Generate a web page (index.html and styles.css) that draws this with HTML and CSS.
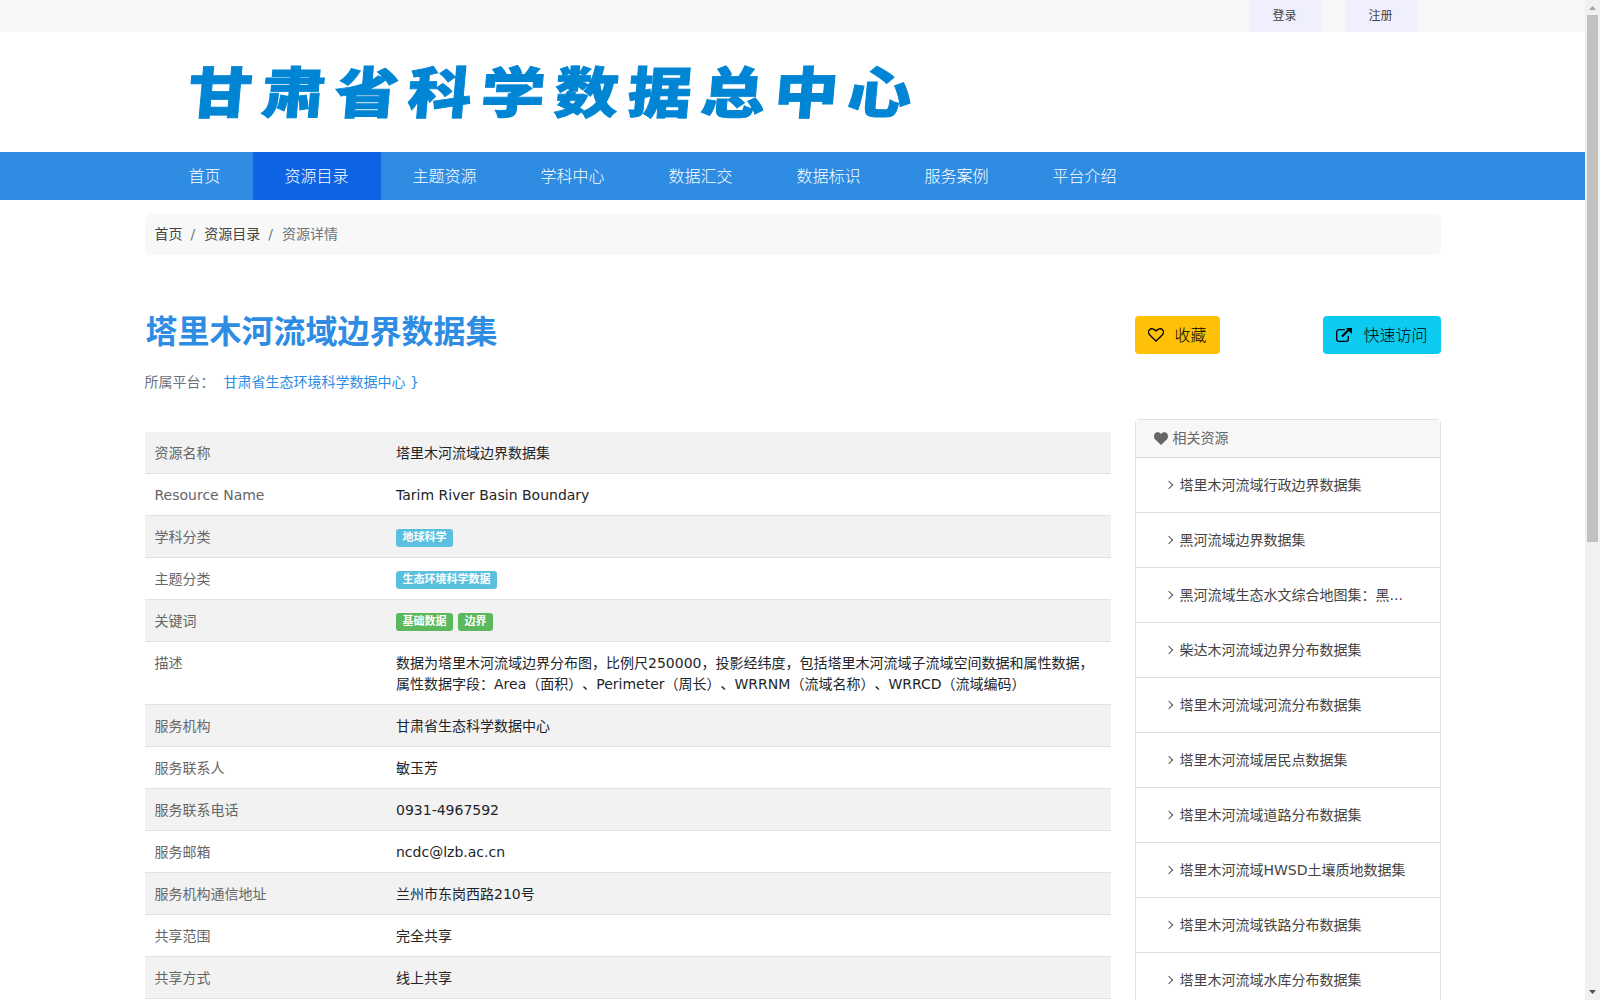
FILE: index.html
```html
<!DOCTYPE html>
<html lang="zh-CN">
  <head>
    <meta charset="UTF-8" />
    <meta name="viewport" content="width=device-width, initial-scale=1.0" />
    <title>塔里木河流域边界数据集</title>
    <link rel="stylesheet" href="styles.css">
  </head>
  <body>
    <div class="page">
      <div class="topbar">
        <div class="container">
          <a href="#">登录</a>
          <a href="#">注册</a>
        </div>
      </div>
      <header class="container">
        <div class="logo">甘肃省科学数据总中心</div>
      </header>
      <nav class="navbar">
        <ul class="container">
          <li><a href="#">首页</a></li>
          <li class="active"><a href="#">资源目录</a></li>
          <li><a href="#">主题资源</a></li>
          <li><a href="#">学科中心</a></li>
          <li><a href="#">数据汇交</a></li>
          <li><a href="#">数据标识</a></li>
          <li><a href="#">服务案例</a></li>
          <li><a href="#">平台介绍</a></li>
        </ul>
      </nav>
      <main class="container">
        <ol class="breadcrumb">
          <li><a href="#">首页</a></li>
          <li><a href="#">资源目录</a></li>
          <li class="current">资源详情</li>
        </ol>
        <div class="row">
          <section class="detail">
            <h2>塔里木河流域边界数据集</h2>
            <p class="platform"><span>所属平台：</span><a href="#">甘肃省生态环境科学数据中心 }</a></p>
            <table class="table">
              <tr>
                <th>资源名称</th>
                <td>塔里木河流域边界数据集</td>
              </tr>
              <tr>
                <th>Resource Name</th>
                <td>Tarim River Basin Boundary</td>
              </tr>
              <tr>
                <th>学科分类</th>
                <td><span class="label info">地球科学</span></td>
              </tr>
              <tr>
                <th>主题分类</th>
                <td><span class="label info">生态环境科学数据</span></td>
              </tr>
              <tr>
                <th>关键词</th>
                <td><span class="label success">基础数据</span> <span class="label success">边界</span></td>
              </tr>
              <tr>
                <th>描述</th>
                <td>数据为塔里木河流域边界分布图，比例尺250000，投影经纬度，包括塔里木河流域子流域空间数据和属性数据，<br />属性数据字段：Area（面积）、Perimeter（周长）、WRRNM（流域名称）、WRRCD（流域编码）</td>
              </tr>
              <tr>
                <th>服务机构</th>
                <td>甘肃省生态科学数据中心</td>
              </tr>
              <tr>
                <th>服务联系人</th>
                <td>敏玉芳</td>
              </tr>
              <tr>
                <th>服务联系电话</th>
                <td>0931-4967592</td>
              </tr>
              <tr>
                <th>服务邮箱</th>
                <td>ncdc@lzb.ac.cn</td>
              </tr>
              <tr>
                <th>服务机构通信地址</th>
                <td>兰州市东岗西路210号</td>
              </tr>
              <tr>
                <th>共享范围</th>
                <td>完全共享</td>
              </tr>
              <tr>
                <th>共享方式</th>
                <td>线上共享</td>
              </tr>
            </table>
          </section>
          <aside class="side">
            <div class="actions">
              <button class="btn warning" type="button">
                <svg width="16" height="14" viewBox="0 0 16 14" fill="none" stroke="currentColor" stroke-width="1.3"><path d="M8 13 2 7.2C.2 5.3.3 2.9 1.6 1.6 3.3.2 6 .5 8 3c2-2.5 4.700-2.800 6.400-1.400 1.300 1.300 1.400 3.700-.4 5.600z" /></svg>
                收藏
              </button>
              <button class="btn cyan" type="button">
                <svg width="16" height="14" viewBox="0 0 16 14" fill="none" stroke="currentColor"><path stroke-width="1.3" d="M9 1.700H3A2.300 2.300 0 0 0 .7 4v7A2.300 2.300 0 0 0 3 13.300h7a2.300 2.300 0 0 0 2.300-2.300V8" /><path stroke-width="2.2" d="m6 8.500 7-7" /><path fill="currentColor" stroke="none" d="M10 0h6v6z" /></svg>
                快速访问
              </button>
            </div>
            <div class="card">
              <div class="card-header">
                <svg width="14" height="13" viewBox="0 0 14 13" fill="currentColor"><path d="M7 13 1 7.200C-.2 5.900-.3 2.900.8 1.500 2.600-.5 5.600-.2 7 2c1.400-2.200 4.400-2.500 6.200-.5 1.100 1.400 1 4.400-.2 5.700z" /></svg>
                相关资源
              </div>
              <ul>
                <li><a href="#">塔里木河流域行政边界数据集</a></li>
                <li><a href="#">黑河流域边界数据集</a></li>
                <li><a href="#">黑河流域生态水文综合地图集：黑...</a></li>
                <li><a href="#">柴达木河流域边界分布数据集</a></li>
                <li><a href="#">塔里木河流域河流分布数据集</a></li>
                <li><a href="#">塔里木河流域居民点数据集</a></li>
                <li><a href="#">塔里木河流域道路分布数据集</a></li>
                <li><a href="#">塔里木河流域HWSD土壤质地数据集</a></li>
                <li><a href="#">塔里木河流域铁路分布数据集</a></li>
                <li><a href="#">塔里木河流域水库分布数据集</a></li>
              </ul>
            </div>
          </aside>
        </div>
      </main>
    </div>
    <div class="scrollbar">
      <svg width="15" height="15" viewBox="0 0 15 15"><path fill="#a3a3a3" d="M4 10h7L7.500 6z" /></svg>
      <div class="thumb"></div>
      <svg class="down" width="15" height="15" viewBox="0 0 15 15"><path fill="#505050" d="M4 5h7L7.500 9z" /></svg>
    </div>
  </body>
</html>
```
FILE: styles.css
```css
* {
  box-sizing: border-box;
}
body {
  display: flex;
  height: 100vh;
  margin: 0;
  overflow: hidden;
  font: 14px/21px "DejaVu Sans", "Noto Sans CJK SC", sans-serif;
  text-spacing-trim: space-all;
  color: #212529;
  background: #fff;
}
a {
  color: #444;
  text-decoration: none;
}
ul,
ol {
  margin: 0;
  padding: 0;
  list-style: none;
}
.page {
  flex: 1;
  overflow: hidden;
}
.container {
  width: 1320px;
  margin: 0 auto;
  padding: 0 12px;
}
.topbar {
  height: 32px;
  background: #f7f7f7;
}
.topbar .container {
  display: flex;
  justify-content: flex-end;
  gap: 24px;
  padding-right: 35.5px;
}
.topbar a {
  padding: 0 24.5px 0 23.5px;
  font-size: 12px;
  line-height: 32px;
  background: #efeffe;
}
header {
  height: 120px;
}
.logo {
  width: 730px;
  margin-left: 43px;
  font-size: 64px;
  font-weight: 900;
  line-height: 125px;
  letter-spacing: 9.3px;
  white-space: nowrap;
  color: #0085d4;
  -webkit-text-stroke: 1px #0085d4;
  transform: skewX(-5deg) scaleY(0.86);
}
.navbar {
  height: 48px;
  background: #2e8ce3;
}
.navbar ul {
  display: flex;
  padding-left: 24px;
}
.navbar a {
  display: block;
  height: 48px;
  padding: 0 32px;
  font-size: 16px;
  font-weight: 300;
  line-height: 49px;
  color: #fff;
}
.navbar .active {
  background: #0c63e4;
}
.breadcrumb {
  display: flex;
  margin-top: 14px;
  padding: 10px;
  border-radius: 6px;
  background: #f8f8f8;
}
.breadcrumb li + li:before {
  content: '/';
  padding: 0 9px 0 8px;
  color: #6c757d;
}
.breadcrumb .current {
  color: #6c757d;
}
.row {
  display: flex;
  gap: 24px;
}
.detail {
  width: 966px;
}
h2 {
  margin: 58px 0 0 1px;
  font-size: 32px;
  font-weight: 700;
  line-height: 38px;
  color: #2e8ce3;
}
.platform {
  display: flex;
  gap: 9px;
  margin: 21px 0 39px;
  color: #6c757d;
}
.platform a {
  color: #2e8ce3;
}
.table {
  width: 100%;
  border-collapse: separate;
  border-spacing: 0;
}
.table th,
.table td {
  padding: 11px 10px 9px;
  text-align: left;
  vertical-align: top;
  border-bottom: 1px solid #dee2e6;
}
.table th {
  width: 25%;
  font-weight: normal;
  color: #666;
}
.table tr:nth-child(odd) {
  background: #f2f2f2;
}
.label {
  display: inline-block;
  height: 18px;
  margin-top: 2px;
  padding: 0 6.5px;
  border-radius: 3px;
  font-size: 11px;
  font-weight: 700;
  line-height: 18px;
  vertical-align: top;
  color: #fff;
}
.label + .label {
  margin-left: 0.5px;
}
.info {
  background: #5bc0de;
}
.success {
  background: #5cb85c;
}
.side {
  width: 306px;
}
.actions {
  display: flex;
  justify-content: space-between;
  margin: 61px 0 65px;
}
.btn {
  display: flex;
  align-items: center;
  gap: 11px;
  height: 38px;
  padding: 0 13px;
  border: 0;
  border-radius: 4px;
  font: inherit;
  font-size: 16px;
  font-weight: 300;
  color: #000;
}
.warning {
  background: #ffc107;
}
.cyan {
  background: #0dcaf0;
}
.card {
  border: 1px solid #dfdfdf;
  border-radius: 4px;
}
.card-header {
  display: flex;
  align-items: center;
  gap: 5px;
  height: 38px;
  padding-left: 18px;
  border-bottom: 1px solid #d8d8d8;
  color: #666;
  background: #f7f7f7;
}
.card li {
  display: flex;
  align-items: center;
  height: 55px;
  padding-left: 30px;
  border-bottom: 1px solid #dfdfdf;
}
.card li:before {
  content: '';
  width: 5px;
  height: 5px;
  margin-right: 8px;
  border: solid #555;
  border-width: 1.5px 1.5px 0 0;
  transform: rotate(45deg);
}
.scrollbar {
  display: flex;
  flex-direction: column;
  width: 15px;
  background: #f1f1f1;
}
.thumb {
  width: 11px;
  height: 527px;
  margin-left: 2px;
  background: #c1c1c1;
}
.scrollbar .down {
  margin-top: auto;
}
```
